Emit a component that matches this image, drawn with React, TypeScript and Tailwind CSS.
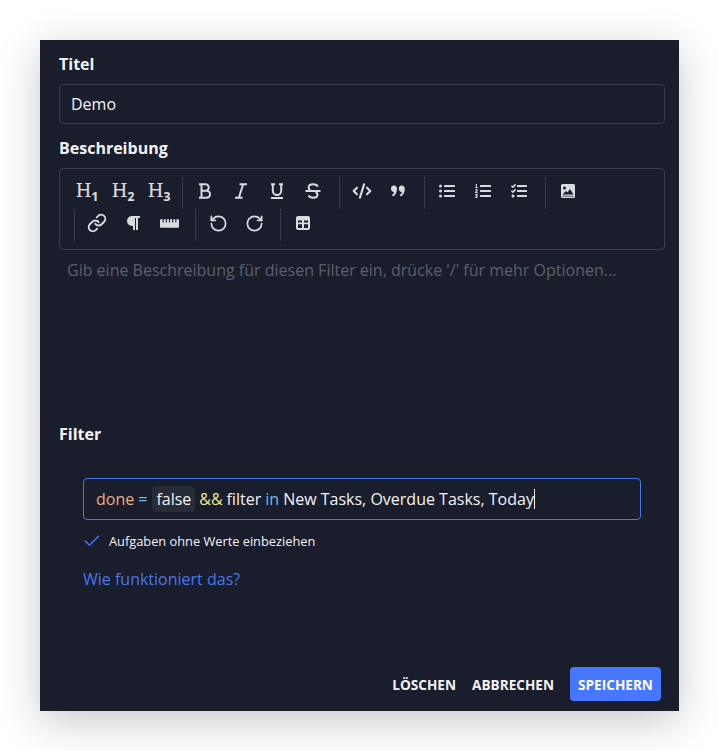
import type { ReactNode } from "react";
import { FaListOl, FaListUl, FaParagraph, FaRulerHorizontal, FaTasks } from "react-icons/fa";
import { Check, CodeXml, Link, RotateCcw, RotateCw } from "lucide-react";

function Btn({ children }: { children: ReactNode }) {
  return <button className="flex h-8 w-9 items-center justify-center pb-1 text-[#d9dbdf]">{children}</button>;
}

function Heading({ n }: { n: number }) {
  return (
    <span className="flex items-end font-['DejaVu_Serif',serif] leading-none [-webkit-text-stroke:0.2px_#d9dbdf]">
      <span className="text-[18px] leading-[18px]">H</span>
      <span className="-mb-[3px] font-['Open_Sans',sans-serif] text-xs font-bold leading-3">{n}</span>
    </span>
  );
}

function Group({ className, children }: { className: string; children: ReactNode }) {
  return <div className={"flex border-l border-[#3a3e4c] pl-[4px] " + className}>{children}</div>;
}

function Glyph({ d, w = 2 }: { d: string; w?: number }) {
  return (
    <svg width="16" height="16" viewBox="0 0 16 16" fill="none" stroke="currentColor" strokeWidth={w} strokeLinejoin="round">
      <path d={d} />
    </svg>
  );
}

function Solid({ d }: { d: string }) {
  return (
    <svg width="16" height="16" viewBox="0 0 16 16" fill="currentColor">
      <path d={d} fillRule="evenodd" />
    </svg>
  );
}

export default function App() {
  return (
    <div className="min-h-[751px] bg-white pt-10 pl-10 font-['Open_Sans',sans-serif]">
      <div className="flex h-[671px] w-[639px] flex-col bg-[#1a1d2b] pl-[19px] pr-[14px] text-[#f2f3f5] shadow-[0_10px_40px_rgba(0,0,0,0.22)]">
        <label className="mt-[13px] text-base font-bold leading-[22px]">Titel</label>
        <div className="mt-[9px] flex h-10 items-center rounded border border-[#3a3e4c] px-[11px] text-base">Demo</div>

        <label className="mt-[13px] text-base font-bold leading-[22px]">Beschreibung</label>
        <div className="mt-[9px] flex h-[82px] flex-wrap content-start rounded border border-[#3a3e4c] pl-[9px] pt-[8px]">
          <div className="flex">
            <Btn><Heading n={1} /></Btn>
            <Btn><Heading n={2} /></Btn>
            <Btn><Heading n={3} /></Btn>
          </div>
          <Group className="ml-[5px]">
            <Btn><Glyph d="M2 1.200h6.500a3.200 3.200 0 0 1 0 6.500H4.500M4.500 1.200v13.600M2 14.800h7.500a3.500 3.500 0 0 0 0-7.100H4.500" /></Btn>
            <Btn><Glyph d="M6.500 1.300H14M2 14.700h7.500M10.200 1.300 5.800 14.700" /></Btn>
            <Btn><Glyph d="M2 1.300h4M10 1.300h4M3.800 1.300v6.400a4.200 4.200 0 0 0 8.400 0V1.300M2 15h12" /></Btn>
            <Btn><Glyph d="M12.800 3.600C12 2 10.400 1.300 8.200 1.300 5.400 1.300 3.600 2.800 3.600 4.600c0 1.200.6 2 1.800 2.600M.5 8.100h15M10.500 9c1.400.6 2 1.400 2 2.500 0 1.800-1.800 3.200-4.400 3.200-2.300 0-3.800-.7-4.500-2.200" /></Btn>
          </Group>
          <Group className="ml-[8px]">
            <Btn><CodeXml size={20} strokeWidth={2.5} /></Btn>
            <Btn><Solid d="M1 5.500C1 3.700 2.300 2.500 4 2.500S7 3.800 7 6c0 3.200-1.500 6-4 7.500l-1-1.400c1.100-.8 1.800-1.800 2.100-2.900C2.300 9.100 1 7.500 1 5.500ZM8.800 5.500c0-1.800 1.300-3 3-3s3 1.300 3 3.500c0 3.200-1.500 6-4 7.500l-1-1.400c1.100-.8 1.800-1.800 2.100-2.900-1.800-.1-3.100-1.700-3.100-3.700Z" /></Btn>
          </Group>
          <Group className="ml-[8px]">
            <Btn><FaListUl size={16} /></Btn>
            <Btn><FaListOl size={16} /></Btn>
            <Btn><FaTasks size={16} /></Btn>
          </Group>
          <Group className="ml-[8px]">
            <Btn><Solid d="M2.500 1h11A1.500 1.500 0 0 1 15 2.500v11a1.500 1.500 0 0 1-1.500 1.500h-11A1.500 1.500 0 0 1 1 13.500v-11A1.500 1.500 0 0 1 2.500 1ZM4.500 3.500a1.500 1.500 0 1 0 0 3 1.500 1.500 0 0 0 0-3ZM2.500 11.500h11L10 6 7.500 9.500 6 8ZM2.500 12.800v.8h11v-.8Z" /></Btn>
          </Group>
          <Group className="ml-[5px]">
            <Btn><Link size={20} strokeWidth={2.3} /></Btn>
            <Btn><FaParagraph size={16} /></Btn>
            <Btn><FaRulerHorizontal size={19} /></Btn>
          </Group>
          <Group className="ml-[8px]">
            <Btn><RotateCcw size={19} strokeWidth={2.2} /></Btn>
            <Btn><RotateCw size={19} strokeWidth={2.2} /></Btn>
          </Group>
          <Group className="ml-[8px]">
            <Btn><Solid d="M3 1h10a2 2 0 0 1 2 2v10a2 2 0 0 1-2 2H3a2 2 0 0 1-2-2V3a2 2 0 0 1 2-2ZM3 5.500v2h4v-2ZM9 5.500v2h4v-2ZM3 9.300V13h4V9.300ZM9 9.300V13h4V9.300Z" /></Btn>
          </Group>
        </div>
        <p className="mt-[9px] pl-2 text-base leading-[22px] text-[#5c606c]">
          Gib eine Beschreibung für diesen Filter ein, drücke '/' für mehr Optionen...
        </p>

        <label className="mt-[142px] text-base font-bold leading-[22px]">Filter</label>

        <div className="mt-[33px] ml-6 mr-[10px]">
          <div className="flex h-[42px] w-[558px] items-center rounded border border-[#4777f0] pl-3 text-base text-[#f2f3f5]">
            <span className="text-[#e5b080]">done</span>
            <span className="ml-[4px] text-[#6fc0e8]">=</span>
            <span className="ml-[5px] rounded bg-[#272c36] px-1 leading-[26px]">false</span>
            <span className="ml-1 text-[#f0ea8c]">&amp;&amp;</span>
            <span className="ml-1">filter</span>
            <span className="ml-1 text-[#6fc0e8]">in</span>
            <span className="ml-1">New Tasks, Overdue Tasks, Today</span>
            <span className="h-[20px] w-px bg-white" />
          </div>
          <div className="mt-[11px] -ml-[1px] flex items-center">
            <Check size={20} strokeWidth={1.6} className="text-[#4777f0]" />
            <span className="ml-[7px] text-[12.8px] leading-[20px]">Aufgaben ohne Werte einbeziehen</span>
          </div>
          <a className="mt-[17px] block text-base leading-[22px] text-[#4777f0]">Wie funktioniert das?</a>
        </div>

        <div className="mt-auto mb-[10px] mr-[4px] flex items-center justify-end text-[13.6px] font-bold">
          <button className="pt-[2px]">LÖSCHEN</button>
          <button className="ml-4 pt-[2px]">ABBRECHEN</button>
          <button className="ml-4 h-[34px] w-[91px] rounded bg-[#4777ff] pt-[2px] text-white">SPEICHERN</button>
        </div>
      </div>
    </div>
  );
}
